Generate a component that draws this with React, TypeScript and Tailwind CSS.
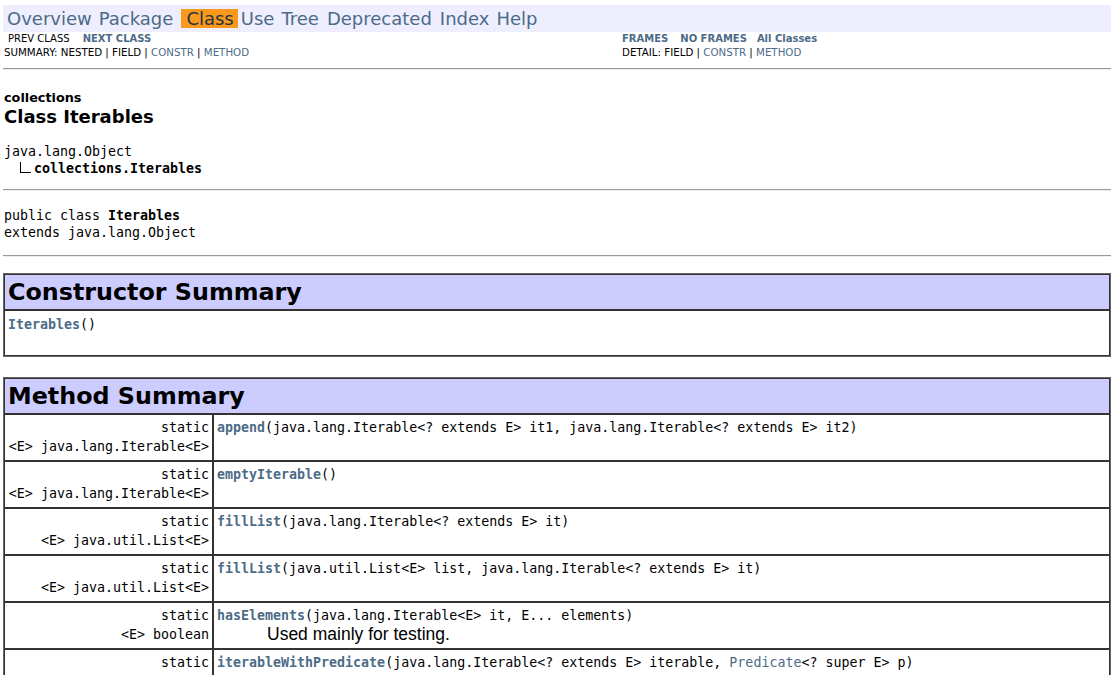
import React from "react";

const LINK = "text-[#4c6b87]";
const MONO = "font-['DejaVu_Sans_Mono',monospace]";

type Row = {
  type: string;
  name: string;
  params: React.ReactNode;
  desc?: string;
};

const rows: Row[] = [
  {
    type: "<E> java.lang.Iterable<E>",
    name: "append",
    params: "(java.lang.Iterable<? extends E> it1, java.lang.Iterable<? extends E> it2)",
  },
  { type: "<E> java.lang.Iterable<E>", name: "emptyIterable", params: "()" },
  { type: "<E> java.util.List<E>", name: "fillList", params: "(java.lang.Iterable<? extends E> it)" },
  {
    type: "<E> java.util.List<E>",
    name: "fillList",
    params: "(java.util.List<E> list, java.lang.Iterable<? extends E> it)",
  },
  {
    type: "<E> boolean",
    name: "hasElements",
    params: "(java.lang.Iterable<E> it, E... elements)",
    desc: "Used mainly for testing.",
  },
  {
    type: "<E> java.lang.Iterable<E>",
    name: "iterableWithPredicate",
    params: (
      <>
        (java.lang.Iterable&lt;? extends E&gt; iterable, <span className={LINK}>Predicate</span>&lt;? super E&gt; p)
      </>
    ),
  },
];

function Hr({ className = "" }: { className?: string }) {
  return <div className={"h-[2px] border-t border-t-[#9a9a9a] border-b border-b-[#eeeeee] " + className} />;
}

export default function App() {
  return (
    <div className="min-h-[675px] bg-white px-[3px] text-black font-['DejaVu_Sans',sans-serif] text-[16px]">
      {/* top nav */}
      <div className="mt-[5px] flex h-[27px] items-center bg-[#eeeeff] text-[18px] text-[#4c6b87]">
        <span className="ml-[4px]">Overview</span>
        <span className="ml-[7px]">Package</span>
        <span className="ml-[8px] h-[19px] bg-[#f8981d] pl-[5px] pr-[4px] leading-[19px] text-[#253441]">Class</span>
        <span className="ml-[3px]">Use</span>
        <span className="ml-[7px]">Tree</span>
        <span className="ml-[8px]">Deprecated</span>
        <span className="ml-[8px]">Index</span>
        <span className="ml-[7px]">Help</span>
      </div>

      {/* sub nav */}
      <div className="flex pt-[1px] text-[10px] leading-[12px]">
        <div className="w-[619px]">
          <div className="flex">
            <span className="ml-[5px]">PREV CLASS</span>
            <span className={"ml-[13px] font-bold " + LINK}>NEXT CLASS</span>
          </div>
          <div className="mt-[1px] ml-[1px] text-[10.25px]">
            SUMMARY: NESTED | FIELD | <span className={LINK}>CONSTR</span> | <span className={LINK}>METHOD</span>
          </div>
        </div>
        <div>
          <div className={"flex font-bold " + LINK}>
            <span>FRAMES</span>
            <span className="ml-[12px]">NO FRAMES</span>
            <span className="ml-[10px]">All Classes</span>
          </div>
          <div className="mt-[1px] text-[10.25px]">
            DETAIL: FIELD | <span className={LINK}>CONSTR</span> | <span className={LINK}>METHOD</span>
          </div>
        </div>
      </div>

      <Hr className="mt-[10px]" />

      {/* header */}
      <div className="mt-[20px] pl-[1px]">
        <div className="text-[12.8px] font-bold leading-[16px]">collections</div>
        <div className="text-[18px] font-bold leading-[22px]">Class Iterables</div>
      </div>

      <div className={"mt-[15px] pl-[1px] text-[13.3px] leading-[17px] " + MONO}>
        <div>java.lang.Object</div>
        <div className="flex items-start">
          <span className="ml-[16px] mt-[2px] inline-block h-[11px] w-[11px] border-b border-l border-black" />
          <span className="ml-[3px] font-bold">collections.Iterables</span>
        </div>
      </div>

      <Hr className="mt-[12px]" />

      <div className={"mt-[16px] pl-[1px] text-[13.3px] leading-[17px] " + MONO}>
        <div>
          public class <span className="font-bold">Iterables</span>
        </div>
        <div>extends java.lang.Object</div>
      </div>

      <Hr className="mt-[14px]" />

      {/* constructor summary */}
      <table className="mt-[16px] w-full border-separate border-spacing-0 border border-[#666666]">
        <tbody>
          <tr>
            <th className="border border-[#333333] bg-[#ccccff] px-[3px] py-[2px] text-left text-[23.8px] font-bold leading-[30px]">
              Constructor Summary
            </th>
          </tr>
          <tr>
            <td className="h-[46px] border border-[#333333] px-[3px] py-[3px] align-top leading-[19px]">
              <span className={"text-[13.3px] " + MONO}>
                <span className={"font-bold " + LINK}>Iterables</span>()
              </span>
            </td>
          </tr>
        </tbody>
      </table>

      {/* method summary */}
      <table className="mt-[20px] w-full border-separate border-spacing-0 border border-[#666666]">
        <tbody>
          <tr>
            <th
              colSpan={2}
              className="border border-[#333333] bg-[#ccccff] px-[3px] pt-[2px] pb-[2px] text-left text-[23.8px] font-bold leading-[30px]"
            >
              Method Summary
            </th>
          </tr>
          {rows.map((r, i) => (
            <tr key={i}>
              <td
                className={
                  "h-[47px] w-[209px] border border-[#333333] px-[3px] py-[3px] text-right align-top text-[13.3px] leading-[19px] " +
                  MONO
                }
              >
                static
                <br />
                {r.type}
              </td>
              <td className="h-[47px] border border-[#333333] px-[3px] py-[3px] align-top leading-[19px]">
                <div className={"text-[13.3px] " + MONO}>
                  <span className={"font-bold " + LINK}>{r.name}</span>
                  {r.params}
                </div>
                {r.desc && (
                  <div className="pl-[50px] font-['Liberation_Sans',sans-serif] text-[17.5px] leading-[19px]">
                    {r.desc}
                  </div>
                )}
              </td>
            </tr>
          ))}
        </tbody>
      </table>
    </div>
  );
}
